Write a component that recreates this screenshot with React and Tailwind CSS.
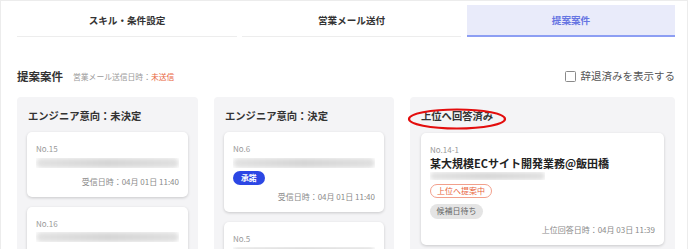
import React, { useState } from "react";

const jp = { fontFamily: '"Noto Sans CJK JP", "Noto Sans", sans-serif' };

// blurred placeholder for hidden project names
function Blur({ w = "w-full", h = "h-[10px]" }) {
  return (
    <div className={`${w} ${h} overflow-hidden`}>
      <div className="h-full w-full rounded-full bg-gradient-to-r from-[#e2e2e2] via-[#d6d6d6] to-[#e0e0e0] blur-[2px]" />
    </div>
  );
}

function Card({ no, children, date, label = "受信日時" }) {
  return (
    <div className="bg-white rounded-[5px] shadow-[0_1px_3px_rgba(0,0,0,0.18)] px-[9px] pt-[11px] pb-[9.5px]">
      <div className="h-[11px] leading-[11px] text-[8px] text-[#9a9a9a]">{no}</div>
      {children}
      {date && (
        <div className="text-right h-[11px] leading-[11px] text-[8px] text-[#8a8a8a]">
          {label}：{date}
        </div>
      )}
    </div>
  );
}

export default function App() {
  const [showDeclined, setShowDeclined] = useState(false);

  return (
    <div
      style={jp}
      className="w-[688px] h-[249px] overflow-hidden bg-white border-t border-x border-[#ececec] pl-[16px] pr-[12px]"
    >
      {/* Tabs */}
      <div className="flex mt-[4px] h-[32px]">
        <div className="w-[220px] flex items-center justify-center border-b border-[#ededed] text-[9.6px] font-bold text-[#333]">
          スキル・条件設定
        </div>
        <div className="w-[219px] ml-[5px] flex items-center justify-center border-b border-[#ededed] text-[9.6px] font-bold text-[#333]">
          営業メール送付
        </div>
        <div className="w-[208px] ml-[6px] flex items-center justify-center bg-[#e9ebfa] border-b-2 border-[#8d9ef3] text-[9.6px] font-bold text-[#6675e2]">
          提案案件
        </div>
      </div>

      {/* Header */}
      <div className="flex items-center justify-between mt-[30px] h-[18px]">
        <div className="flex items-end gap-[10px]">
          <span className="text-[11.5px] font-bold text-[#333] leading-[18px]">提案案件</span>
          <span className="text-[7.8px] text-[#9a9a9a] leading-[16px]">
            営業メール送信日時：<span className="text-[#e8643c]">未送信</span>
          </span>
        </div>
        <label className="flex items-center gap-[5px] cursor-pointer">
          <input
            type="checkbox"
            checked={showDeclined}
            onChange={(e) => setShowDeclined(e.target.checked)}
            className="appearance-none w-[11px] h-[11px] border border-[#8a8a8a] rounded-[1.5px] bg-white"
          />
          <span className="text-[10.5px] text-[#555]">辞退済みを表示する</span>
        </label>
      </div>

      {/* Columns */}
      <div className="grid grid-cols-[181px_180px_265px] gap-[16px] mt-[12px]">
        <div className="bg-[#f4f4f6] rounded-[4px] px-[10px] pt-[12px] h-[200px]">
          <div className="h-[14px] leading-[14px] text-[10.3px] font-bold text-[#333] pl-[1px]">エンジニア意向：未決定</div>
          <div className="mt-[9px] flex flex-col gap-[10px]">
            <Card no="No.15" date="04月 01日 11:40">
              <div className="mt-[3.5px] mb-[8.5px]"><Blur /></div>
            </Card>
            <Card no="No.16">
              <div className="mt-[3.5px] mb-[8.5px]"><Blur /></div>
            </Card>
          </div>
        </div>

        <div className="bg-[#f4f4f6] rounded-[4px] px-[10px] pt-[12px] h-[200px]">
          <div className="h-[14px] leading-[14px] text-[10.3px] font-bold text-[#333] pl-[1px]">エンジニア意向：決定</div>
          <div className="mt-[9px] flex flex-col gap-[10px]">
            <Card no="No.6" date="04月 01日 11:40">
              <div className="mt-[3.5px]"><Blur /></div>
              <div className="flex mt-[3px] mb-[6.5px]">
                <span className="flex items-center h-[14px] px-[8px] rounded-full bg-[#2c47e4] text-white text-[7.8px] leading-none font-bold">
                  承諾
                </span>
              </div>
            </Card>
            <Card no="No.5">
              <div className="mt-[3.5px] mb-[8.5px]"><Blur /></div>
            </Card>
          </div>
        </div>

        <div className="relative bg-[#f4f4f6] rounded-[4px] px-[11px] pt-[12px] h-[200px]">
          <div className="h-[14px] leading-[14px] text-[10.3px] font-bold text-[#333]">上位へ回答済み</div>
          <svg
            className="absolute left-[-3px] top-[11px] pointer-events-none"
            width="100"
            height="22"
            viewBox="0 0 100 22"
          >
            <ellipse cx="50" cy="11" rx="48" ry="9.5" fill="none" stroke="#e30d0d" strokeWidth="2.2" />
          </svg>
          <div className="mt-[10px]">
            <Card no="No.14-1" date="04月 03日 11:39" label="上位回答日時">
              <div className="h-[14px] leading-[14px] mt-[0.5px] text-[11px] font-bold text-[#222]">
                某大規模ECサイト開発業務@飯田橋
              </div>
              <div className="mt-[2px]"><Blur w="w-[115px]" h="h-[8px]" /></div>
              <div className="flex mt-[4px]">
                <span className="flex items-center h-[14px] px-[6px] rounded-full border border-[#f2a08c] bg-white text-[#e8643c] text-[8px] leading-none">
                  上位へ提案中
                </span>
              </div>
              <div className="flex mt-[6px] mb-[5.5px]">
                <span className="flex items-center h-[15px] px-[6.5px] rounded-full bg-[#e4e4e4] text-[#666] text-[8px] leading-none">
                  候補日待ち
                </span>
              </div>
            </Card>
          </div>
        </div>
      </div>
    </div>
  );
}
